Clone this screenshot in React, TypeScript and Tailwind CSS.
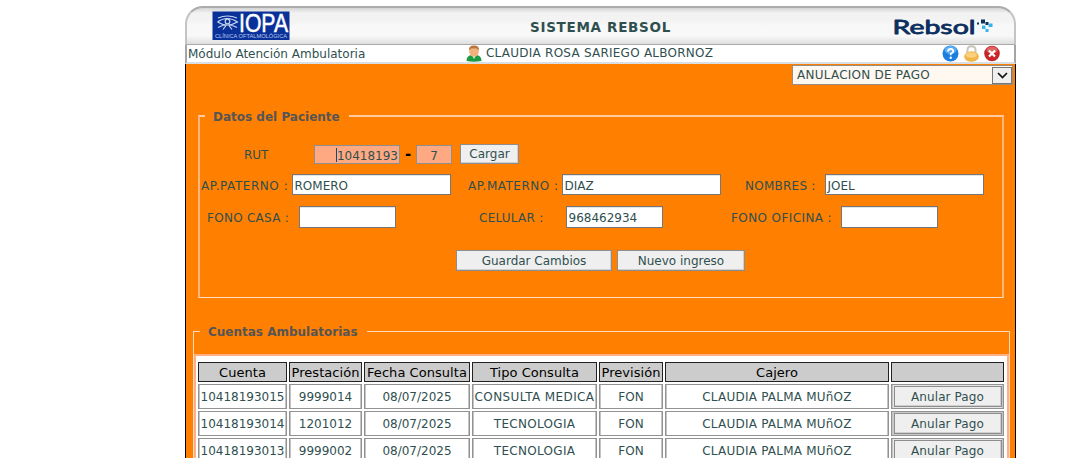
import type { ReactNode } from "react";

const rows = [
  { cuenta: "10418193015", prestacion: "9999014", fecha: "08/07/2025", tipo: "CONSULTA MEDICA", prevision: "FON", cajero: "CLAUDIA PALMA MUñOZ" },
  { cuenta: "10418193014", prestacion: "1201012", fecha: "08/07/2025", tipo: "TECNOLOGIA", prevision: "FON", cajero: "CLAUDIA PALMA MUñOZ" },
  { cuenta: "10418193013", prestacion: "9999002", fecha: "08/07/2025", tipo: "TECNOLOGIA", prevision: "FON", cajero: "CLAUDIA PALMA MUñOZ" },
];

const columns = ["Cuenta", "Prestación", "Fecha Consulta", "Tipo Consulta", "Previsión", "Cajero", ""];

function IopaLogo() {
  return (
    <svg width="78" height="29" viewBox="0 0 78 29" className="block overflow-visible">
      <rect x="0.5" y="0.5" width="77" height="28.500" fill="#0a3199" />
      <g fill="none" stroke="#c9d6f2" strokeWidth="1.200">
        <path d="M6 7Q15.500 3 25 7M5.500 11Q15 4 25.500 11Q15 17 5.500 11M6 16.500Q12 13.500 14 14.500M25 16.500Q19 13.500 17 14.500M14 14.500L11 18.500M17 14.500L20 18.500" />
        <circle cx="15.500" cy="10.500" r="2.300" />
      </g>
      <text x="27" y="21" textLength="49" lengthAdjust="spacingAndGlyphs" fill="#fff" stroke="#fff" strokeWidth="0.5" fontFamily="Liberation Sans, sans-serif" fontSize="25">IOPA</text>
      <text x="3" y="26.800" textLength="72" lengthAdjust="spacingAndGlyphs" fill="#b9c8ee" fontFamily="Liberation Sans, sans-serif" fontSize="5">CLÍNICA OFTALMOLÓGICA</text>
    </svg>
  );
}

function RebsolLogo() {
  return (
    <svg width="102" height="22" viewBox="0 0 102 22" className="block overflow-visible">
      <text x="-0.5" y="16.5" textLength="83" lengthAdjust="spacingAndGlyphs" fill="#0c2f5f" stroke="#0c2f5f" strokeWidth="0.8" strokeLinejoin="round" fontFamily="Lato, sans-serif" fontWeight="400" fontSize="19">Rebsol</text>
      <g fill="#0c2f5f">
        <rect x="84" y="5.500" width="2" height="2" />
        <rect x="88" y="2.500" width="4" height="4" />
        <rect x="92.500" y="5" width="3" height="3" />
      </g>
      <g fill="#35b4ea">
        <rect x="89" y="8.500" width="3.500" height="3.500" />
        <rect x="92.500" y="12" width="3" height="3" />
        <rect x="95.500" y="6.500" width="4" height="3.500" />
      </g>
    </svg>
  );
}

function UserIcon() {
  return (
    <svg width="16" height="17" viewBox="0 0 16 17" className="block">
      <path d="M.5 16Q.5 11 5 10H11Q15.500 11 15.500 16Q8 17.500 .5 16Z" fill="#1b9b44" />
      <path d="M6 10L8 14L10 10Z" fill="#e9f7ea" />
      <ellipse cx="8" cy="6.500" rx="4.800" ry="5.200" fill="#f0b27a" />
      <path d="M3 5.500Q2.500 .5 8 .5Q13.500 .5 13 5.500Q11 2.800 8 3.500Q5 2.800 3 5.500Z" fill="#b97540" />
    </svg>
  );
}

function StatusIcons() {
  return (
    <svg width="60" height="18" viewBox="0 0 60 18" className="block">
      <circle cx="8.500" cy="8.500" r="8" fill="#1c7fe0" />
      <ellipse cx="8.500" cy="5" rx="6" ry="4" fill="#5aaef5" />
      <path d="M6 6.500Q6 4 8.700 4Q11.300 4 11.200 6.300Q11 7.800 8.700 8.800V10.300" fill="none" stroke="#fff" strokeWidth="1.8" />
      <circle cx="8.700" cy="12.700" r="1.200" fill="#fff" />
      <path d="M25.500 9V5Q25.500 1.300 29.500 1.300Q33.500 1.300 33.500 5V9" fill="none" stroke="#c9c5ba" strokeWidth="2" />
      <ellipse cx="29.500" cy="11.500" rx="7.300" ry="5.300" fill="#f1b64a" />
      <ellipse cx="29.200" cy="10" rx="5.500" ry="2.800" fill="#fbd07c" />
      <circle cx="50" cy="8.500" r="7.800" fill="#c8242a" />
      <ellipse cx="50" cy="5" rx="5.500" ry="3.500" fill="#dc6462" />
      <path d="M47 5.500L53 11.500M53 5.500L47 11.500" stroke="#fff" strokeWidth="2.200" />
    </svg>
  );
}

function Field({ label, labelClass, inputClass, value }: { label: string; labelClass: string; inputClass: string; value?: string }) {
  return (
    <div className="flex items-center">
      <span className={labelClass}>{label}</span>
      <span className={`flex items-center border border-[#767676] bg-white pl-[1.5px] shadow-[inset_0_1px_0_#e3e3e3] ${inputClass}`}>{value}</span>
    </div>
  );
}

function Button({ className, children }: { className: string; children: ReactNode }) {
  return (
    <button className={`flex items-center justify-center border border-[#8d8d8d] bg-[#efefef] shadow-[inset_-1px_-1px_0_#cfcfcf] ${className}`}>
      {children}
    </button>
  );
}

function Cell({ className = "bg-white", children }: { className?: string; children: ReactNode }) {
  return (
    <div className={`flex items-center justify-center border border-[#929292] shadow-[inset_1px_0_0_#c4c4c4,inset_-1px_0_0_#c4c4c4] ${className}`}>
      {children}
    </div>
  );
}

export default function App() {
  return (
    <div className="h-[458px] w-[1081px] overflow-hidden bg-white pt-[6px] pl-[185px] font-['DejaVu_Sans',sans-serif] text-[12px] leading-[16px] whitespace-nowrap text-[#2f4f4f]">
      <div className="w-[831px]">
        <header className="flex h-[39px] items-start rounded-t-[18px] border-x-2 border-t-2 border-b border-x-[#c4c4c4] border-t-[#acacac] border-b-[#aaa] bg-[linear-gradient(#d5d5d5_0,#f2f2f2_5px,#f3f3f3_12px,#f8f8f8_18px,#f8f8f8_28px,#dedede_36px)] pt-[3px]">
          <div className="w-[318px] pl-[25px]"><IopaLogo /></div>
          <h1 className="w-[388px] pt-[7px] pl-[25px] text-[13.5px] leading-[19px] font-bold tracking-[0.7px]">SISTEMA REBSOL</h1>
          <div className="pt-[6px]"><RebsolLogo /></div>
        </header>
        <div className="flex h-[19px] border-r-2 border-b-2 border-l-2 border-r-[#a5a5a5] border-b-[#d9dfe3] border-l-[#a5a5a5] bg-white">
          <span className="w-[279px] pl-px leading-[18px]">Módulo Atención Ambulatoria</span>
          <UserIcon />
          <span className="w-[460px] pl-[4px] leading-[16px] tracking-[0.24px]">CLAUDIA ROSA SARIEGO ALBORNOZ</span>
          <StatusIcons />
        </div>
        <main className="h-[396px] border-x border-black bg-[#ff8000]">
          <div className="flex justify-end pr-[2px]">
            <div className="mt-px flex h-[20px] w-[221px] items-center justify-between border border-[#9a8c80] bg-[#fff8f0] pl-[4px]">
              <span className="tracking-[0.24px]">ANULACION DE PAGO</span>
              <span className="flex h-[17px] w-[20px] items-center justify-center border border-[#777] bg-[#efefef]">
                <svg width="11" height="7" viewBox="0 0 11 7"><path d="M1 1L5.500 5.500L10 1" fill="none" stroke="#111" strokeWidth="1.700" /></svg>
              </span>
            </div>
          </div>
          <fieldset className="mt-[23px] ml-[12px] h-[190px] w-[806px] border-2 border-b border-[#ffb87c] border-t-[#ffcb9e] border-b-[#ffe0c4]">
            <legend className="ml-[5px] h-[16px] w-[144px] pl-[8px] leading-[18px] font-bold text-[#555]">Datos del Paciente</legend>
            <div className="mt-[20px] flex h-[20px] items-center pl-[44px]">
              <span className="w-[70px] pt-[2px]">RUT</span>
              <span className="flex h-[19px] w-[86px] items-center justify-end border border-[#8f8f8f] bg-[#ffa982] pt-[4px] pr-px">
                <span className="mb-[3px] h-[14px] w-px bg-[#064f86]" />10418193
              </span>
              <span className="w-[16px] text-center text-[15px] font-bold text-black">-</span>
              <span className="flex h-[19px] w-[36px] items-center justify-center border border-[#8f8f8f] bg-[#ffa982] pt-[4px]">7</span>
              <Button className="ml-[8px] h-[20px] w-[59px]">Cargar</Button>
            </div>
            <div className="mt-[9px] flex h-[22px] items-center">
              <Field label="AP.PATERNO :" labelClass="w-[92px] pt-[4px] pl-px tracking-[0.55px]" inputClass="h-[21px] w-[159px] pt-[3px]" value="ROMERO" />
              <Field label="AP.MATERNO :" labelClass="w-[111px] pt-[4px] pl-[17px] tracking-[0.5px]" inputClass="h-[21px] w-[159px] pt-[3px]" value="DIAZ" />
              <Field label="NOMBRES :" labelClass="w-[104px] pt-[4px] pl-[24px] tracking-[0.25px]" inputClass="h-[21px] w-[159px] pt-[3px]" value="JOEL" />
            </div>
            <div className="mt-[11px] flex h-[22px] items-center">
              <Field label="FONO CASA :" labelClass="w-[99px] pt-[2px] pl-[7px] tracking-[0.27px]" inputClass="h-[22px] w-[97px] pt-[2px]" />
              <Field label="CELULAR :" labelClass="w-[170px] pt-[2px] pl-[83px] tracking-[0.25px]" inputClass="h-[22px] w-[97px] pt-[2px]" value="968462934" />
              <Field label="FONO OFICINA :" labelClass="w-[178px] pt-[2px] pl-[68px] tracking-[0.4px]" inputClass="h-[22px] w-[97px] pt-[2px]" />
            </div>
            <div className="mt-[22px] flex gap-[5px] pl-[256px]">
              <Button className="h-[21px] w-[156px]">Guardar Cambios</Button>
              <Button className="h-[21px] w-[128px]">Nuevo ingreso</Button>
            </div>
          </fieldset>
          <fieldset className="mt-[25px] ml-[7px] h-[160px] w-[817px] border border-[#ffd9b8]">
            <legend className="ml-[6px] h-[16px] w-[167px] pl-[8px] leading-[18px] font-bold text-[#555]">Cuentas Ambulatorias</legend>
            <div className="mt-[15px] h-[140px] w-[815px] border-x-2 border-t-2 border-[#ffae85] bg-white pt-[6px] pl-[2px]">
              <div className="grid grid-cols-[89px_73px_106px_125px_64px_224px_113px] grid-rows-[20px_25px_25px_25px] gap-[2px]">
                {columns.map((name, i) => (
                  <div key={i} className="flex items-center justify-center border border-[#222] bg-[#ccc] pt-[2px] text-[13px] tracking-[0.05px] text-black">{name}</div>
                ))}
                {rows.map((row, i) => (
                  <div key={row.cuenta} className="contents">
                    <Cell>{row.cuenta}</Cell>
                    <Cell>{row.prestacion}</Cell>
                    <Cell>{row.fecha}</Cell>
                    <Cell><span className={i === 0 ? "tracking-[0.4px]" : "tracking-[0.3px]"}>{row.tipo}</span></Cell>
                    <Cell>{row.prevision}</Cell>
                    <Cell><span className="tracking-[0.22px]">{row.cajero}</span></Cell>
                    <Cell className={i % 2 === 1 ? "bg-[#c9c9c9]" : "bg-[#e6e6e6]"}><Button className="h-[21px] w-[108px]"><span className="tracking-[0.1px]">Anular Pago</span></Button></Cell>
                  </div>
                ))}
              </div>
            </div>
          </fieldset>
        </main>
      </div>
    </div>
  );
}
